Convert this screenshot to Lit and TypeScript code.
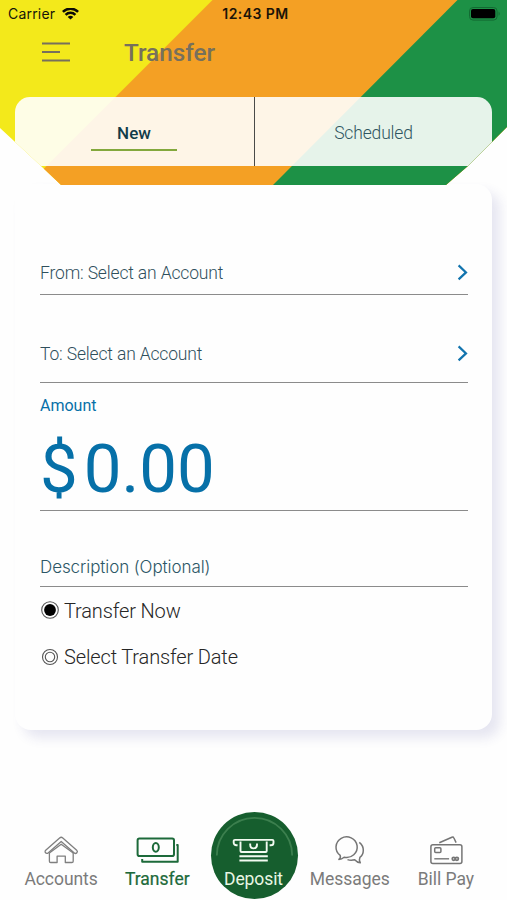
import { LitElement, html, svg, css } from "lit";
import { customElement, property, state } from "lit/decorators.js";
import { classMap } from "lit/directives/class-map.js";

@customElement("status-bar")
class StatusBar extends LitElement {
  static styles = css`
    :host {
      display: grid;
      grid-template-columns: 1fr auto 1fr;
      align-items: center;
      height: 28px;
      padding: 0 5px 0 8px;
      font: 400 14px/28px Inter, "Liberation Sans", sans-serif;
      color: #15150a;
    }
    .carrier { display: flex; align-items: center; gap: 7px; letter-spacing: 0.2px; }
    .time { font-weight: 600; font-size: 14px; letter-spacing: 0.45px; color: #1a1408; padding-left: 1px; }
    .battery { justify-self: end; }
    svg { display: block; }
  `;
  render() {
    return html`
      <div class="carrier">
        <span>Carrier</span>
        <svg width="17" height="13" viewBox="0 0 17 13" fill="none" stroke="#0c0c05" stroke-width="2.5">
          <path d="M0.9 3.9A10.6 10.6 0 0 1 16.1 3.9" />
          <path d="M3.6 6.9A6.8 6.8 0 0 1 13.4 6.9" />
          <path d="M8.5 11.6L5.7 8.9A3.9 3.9 0 0 1 11.3 8.9Z" fill="#0c0c05" stroke="none" />
        </svg>
      </div>
      <div class="time">12:43 PM</div>
      <svg class="battery" width="33" height="14" viewBox="0 0 33 14">
        <rect x="0.5" y="0.5" width="27.6" height="12.6" rx="3.6" fill="none" stroke="#136a32" stroke-width="1" />
        <rect x="2" y="2" width="24.3" height="9.2" rx="2" fill="#000" />
        <path d="M29.6 4.6a2.6 2.6 0 0 1 0 4.2z" fill="#136a32" />
      </svg>
    `;
  }
}

@customElement("account-picker")
class AccountPicker extends LitElement {
  @property() label = "";
  static styles = css`
    :host { display: flex; justify-content: space-between; align-items: center; height: 22px; }
    .label { font: 300 17.5px/22px Roboto, sans-serif; letter-spacing: -0.16px; color: #2f4f5c; }
    svg { display: block; }
  `;
  render() {
    return html`
      <span class="label">${this.label}</span>
      <svg width="11" height="18" viewBox="0 0 11 18" fill="none" stroke="#1274ae" stroke-width="2.2">
        <path d="M1.6 1.4L9 8.4L1.6 15.4" />
      </svg>
    `;
  }
}

const icons: Record<string, unknown> = {
  Accounts: svg`
    <g stroke="#7f7f7f" stroke-width="1.3" stroke-linejoin="round">
      <path d="M0.7 16.2L14.6 4Q16.2 2.6 17.8 4L31.7 16.2A1.7 1.7 0 0 1 29.3 18.9L16.2 7.5L3.1 18.9A1.7 1.7 0 0 1 0.7 16.2Z" />
      <path d="M4.4 18.8V27.2Q4.4 28.5 5.7 28.5H12.1V22.2H20.3V28.5H26.9Q28.2 28.5 28.2 27.2V18.8" />
      <path d="M4.4 19L16.2 10.2L28.2 19" />
    </g>`,
  Transfer: svg`
    <g stroke="#1d6a3a" stroke-width="2">
      <rect x="-3.4" y="4.6" width="36.4" height="17.4" rx="1.8" />
      <ellipse cx="14.8" cy="13.3" rx="3" ry="4.4" />
      <path d="M35.3 11H36.7V27.7H1.2V25" stroke-linejoin="round" />
    </g>`,
  Deposit: svg`
    <g stroke="#f2fbf1" stroke-width="1.9">
      <path d="M0.6 11.3H-0.7A2.6 2.6 0 0 1 -3.3 8.7V7.1A1.2 1.2 0 0 1 -2.1 5.9H35.3A1.2 1.2 0 0 1 36.5 7.1V8.7A2.6 2.6 0 0 1 33.9 11.3H32.6" />
      <path d="M3.5 7.4V17Q3.5 18 4.5 18H28.7Q29.7 18 29.7 17V7.4" />
      <path d="M13.2 9.4V10.8Q13.2 14.4 16.6 14.4T20 10.8V9.4" />
      <path d="M2.4 22.2H30.8M2.4 26.5H30.8" stroke-width="2.1" />
    </g>`,
  Messages: svg`
    <g stroke="#757575" stroke-width="1.5" stroke-linejoin="round" transform="translate(-0.3 0.8)">
      <path d="M6.5 20.6A10.6 10.3 0 1 1 10.4 22.4Q8 24.6 5.2 24.6Q7.3 23 6.5 20.6Z" />
      <path d="M25.6 7.6Q29.6 10.8 29.6 15.4Q29.6 19.8 26.2 22.6Q25 25 26.6 28Q23.5 27.9 21 25Q17 26 13.8 24.8" />
    </g>`,
  "Bill Pay": svg`
    <g stroke="#757575" stroke-width="1.5" stroke-linejoin="round" transform="translate(-0.7 0.2)">
      <rect x="1.6" y="10.5" width="31" height="18.8" rx="2" />
      <path d="M10 8.6L22.6 3Q24 2.4 24.6 3.8L26.8 8.4" />
      <rect x="5.4" y="13.6" width="6.2" height="4.6" rx="1" />
      <path d="M5 24.6H19.8" stroke-width="1.4" />
      <circle cx="24.4" cy="24.6" r="1.5" stroke-width="1.7" />
      <circle cx="27.6" cy="24.6" r="1.5" stroke-width="1.7" />
    </g>`,
};

@customElement("tab-bar")
class TabBar extends LitElement {
  @property() active = "Transfer";
  static styles = css`
    :host { display: grid; grid-template-columns: repeat(5, 1fr); padding: 0 12px 0 14px; height: 88px; }
    .item {
      display: flex; flex-direction: column; align-items: center;
      padding-top: 22px; box-sizing: border-box;
      font: 400 17.5px/24px Roboto, sans-serif; letter-spacing: -0.05px; color: #7b7b7b; white-space: nowrap;
    }
    .item svg { display: block; overflow: visible; margin-bottom: 1px; }
    .item span { margin-right: 2px; }
    .active { color: #1d6a3a; letter-spacing: 0; -webkit-text-stroke: 0.2px #1d6a3a; }
    .primary {
      justify-self: center; width: 87px; height: 87px; border-radius: 50%;
      background: #165e2e; color: #e9f7e4; position: relative; letter-spacing: -0.1px;
    }
    .item .arc { position: absolute; left: 0; top: 0; margin: 0; }
    .glyph { position: relative; }
  `;
  render() {
    return Object.entries(icons).map(
      ([name, icon]) => html`
        <div class=${classMap({ item: true, active: name === this.active, primary: name === "Deposit" })}>
          ${name === "Deposit"
            ? html`<svg class="arc" width="87" height="87" viewBox="0 0 87 87" fill="none">
                <path d="M5.8 43.5A37.7 37.7 0 0 1 81.2 43.5" stroke="#3c7f4e" stroke-width="1.8" />
              </svg>`
            : null}
          <svg class="glyph" width="34" height="32" viewBox="0 0 34 32" fill="none">${icon}</svg>
          <span>${name}</span>
        </div>
      `
    );
  }
}

@customElement("app-root")
class AppRoot extends LitElement {
  @state() private schedule = "Transfer Now";

  static styles = css`
    :host {
      display: flex; flex-direction: column; width: 507px; height: 900px;
      background: #fefefe; overflow: hidden; font-family: Roboto, sans-serif;
    }
    .header {
      flex: none; height: 185px; position: relative; z-index: 1; box-sizing: border-box;
      clip-path: polygon(0 0, 507px 0, 507px 127px, 468px 166px, 446px 185px, 61px 185px, 42px 167px, 0 128px);
    }
    .stripes { position: absolute; inset: 0; display: block; }
    .content { position: relative; display: flex; flex-direction: column; }
    .titlebar { display: flex; align-items: center; height: 50px; padding-left: 42px; gap: 54px; margin-bottom: 19px; }
    .titlebar svg { display: block; margin-top: -2px; }
    .title { font: 500 24.3px/30px Roboto, sans-serif; color: #77705c; }
    .tabs {
      display: grid; grid-template-columns: 239px 1fr; height: 69px; margin: 0 15px;
      border-radius: 15px 15px 0 0; background: rgba(255, 255, 255, 0.89);
    }
    .tab { display: flex; flex-direction: column; align-items: center; padding-top: 24px; font: 300 17.5px/24px Roboto, sans-serif; letter-spacing: -0.16px; color: #2f5561; }
    .tab + .tab { border-left: 1px solid #4a4a48; }
    .selected { font-weight: 500; color: #123c4a; font-size: 17px; letter-spacing: 0; padding-right: 1px; }
    .selected::after { content: ""; width: 86px; height: 2px; margin-top: 4px; background: #83a83c; }
    .card {
      flex: none; height: 546px; margin: -1px 15px 0; box-sizing: border-box; padding: 0 24px 0 25px;
      border-radius: 16px; background: #fefefe; box-shadow: 8px 8px 12px rgba(60, 60, 150, 0.12);
    }
    .field { box-sizing: border-box; border-bottom: 1.5px solid #8b8b8b; }
    .from { height: 111px; padding-top: 78px; }
    .to { height: 88px; padding-top: 48px; }
    .amount { height: 128px; padding-top: 12px; color: #0670a8; }
    .caption { font: 400 16px/22px Roboto, sans-serif; }
    .value { display: flex; gap: 6px; font: 400 67.2px/80px Roboto, sans-serif; margin-top: 12px; }
    .description { height: 76px; padding-top: 44.5px; font: 300 17px/22px Inter, sans-serif; letter-spacing: -0.08px; color: #2c5766; }
    .option { display: flex; align-items: center; height: 47px; gap: 4px; padding-left: 1px; font: 300 20px/24px Roboto, sans-serif; letter-spacing: -0.14px; color: #262626; }
    .option + .option { height: 46px; }
    .option svg { display: block; flex: none; }
    .nav { margin-top: auto; }
  `;

  private radio(label: string) {
    const on = label === this.schedule;
    return html`
      <div class="option" @click=${() => (this.schedule = label)}>
        <svg width="19" height="19" viewBox="0 0 19 19" fill="none">
          <circle cx="9" cy="9" r=${on ? 8.3 : 7.5} stroke="#555" stroke-width="1.1" />
          ${on
            ? svg`<circle cx="9" cy="9" r="5.9" fill="#000" />`
            : svg`<circle cx="9" cy="9" r="4.7" stroke="#555" stroke-width="1.1" />`}
        </svg>
        <span>${label}</span>
      </div>
    `;
  }

  render() {
    return html`
      <div class="header">
        <svg class="stripes" width="507" height="185" viewBox="0 0 507 185">
          <rect width="507" height="185" fill="#f3e91b" />
          <path d="M212.5 0H507V185H27.5Z" fill="#f4a024" />
          <path d="M457.5 0H507V185H273Z" fill="#1d9146" />
        </svg>
        <div class="content">
          <status-bar></status-bar>
          <div class="titlebar">
            <svg width="28" height="20" viewBox="0 0 28 20" stroke="#77705c" stroke-width="2">
              <path d="M0 1.5H28M0 10H18M0 18.5H28" />
            </svg>
            <span class="title">Transfer</span>
          </div>
          <div class="tabs">
            <div class="tab selected">New</div>
            <div class="tab">Scheduled</div>
          </div>
        </div>
      </div>
      <div class="card">
        <div class="field from"><account-picker label="From: Select an Account"></account-picker></div>
        <div class="field to"><account-picker label="To: Select an Account"></account-picker></div>
        <div class="field amount">
          <div class="caption">Amount</div>
          <div class="value"><span>$</span><span>0.00</span></div>
        </div>
        <div class="field description">Description (Optional)</div>
        ${this.radio("Transfer Now")} ${this.radio("Select Transfer Date")}
      </div>
      <tab-bar class="nav"></tab-bar>
    `;
  }
}
